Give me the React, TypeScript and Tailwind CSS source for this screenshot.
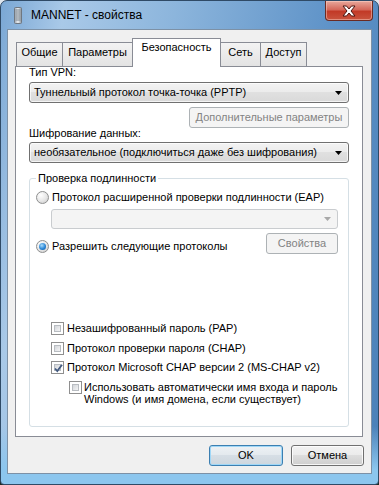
import clsx from "clsx"

const tabs = [
  { label: "Общие", w: "w-[47px]" },
  { label: "Параметры", w: "w-[71px]" },
  { label: "Безопасность", w: "w-[89px]", active: true },
  { label: "Сеть", w: "w-[41px]" },
  { label: "Доступ", w: "w-[47px]" },
]

function ModemIcon() {
  return (
    <svg width="8" height="17" viewBox="0 0 8 17">
      <defs>
        <linearGradient id="mi" x1="0" x2="1">
          <stop offset="0" stopColor="#9aa3ad" />
          <stop offset="0.5" stopColor="#eef1f4" />
          <stop offset="1" stopColor="#8a939c" />
        </linearGradient>
      </defs>
      <rect x="0.5" y="0.5" width="7" height="16" rx="1" fill="url(#mi)" stroke="#6f7780" />
      {[3, 5, 7, 9, 11, 13].map((y) => (
        <line key={y} x1="1.5" x2="6.5" y1={y} y2={y} stroke="#7d8791" strokeWidth="1" />
      ))}
    </svg>
  )
}

function CloseButton() {
  return (
    <div className="mr-[5px] flex h-[20px] w-[48px] items-center justify-center self-start rounded-b-[4px] border border-t-0 border-[#6b2a22] bg-[linear-gradient(#e8a89c,#d5695b_45%,#c23a27_55%,#c9543e)] shadow-[inset_0_0_0_1px_rgba(255,220,210,0.45)]">
      <svg width="16" height="12" viewBox="0 0 16 12">
        <path
          d="M2 1h3.5L8 4l2.5-3H14l-4 5 4 5h-3.5L8 8l-2.5 3H2l4-5z"
          fill="#ffffff"
          stroke="#4a1510"
          strokeWidth="1"
          strokeLinejoin="round"
        />
      </svg>
    </div>
  )
}

function Arrow({ disabled }: { disabled?: boolean }) {
  return (
    <svg width="7" height="4" viewBox="0 0 7 4">
      <path d="M0 0h7L3.5 4z" fill={disabled ? "#a8a8a8" : "#000000"} />
    </svg>
  )
}

function Combo({ value, disabled, className }: { value?: string; disabled?: boolean; className?: string }) {
  return (
    <div
      className={clsx(
        "flex items-center justify-between rounded-[3px] border pl-[4px] pr-[6px]",
        disabled
          ? "border-[#c9cccf] bg-[#f4f4f4]"
          : "border-[#707070] bg-[linear-gradient(#f3f3f3,#ebebeb_50%,#e0e0e0_50%,#d9d9d9)] shadow-[inset_0_0_0_1px_rgba(255,255,255,0.7)]",
        className,
      )}
    >
      <span className="whitespace-nowrap">{value}</span>
      <Arrow disabled={disabled} />
    </div>
  )
}

function Button({
  children,
  disabled,
  primary,
  className,
}: {
  children: string
  disabled?: boolean
  primary?: boolean
  className?: string
}) {
  return (
    <div
      className={clsx(
        "flex items-center justify-center rounded-[3px] border whitespace-nowrap",
        disabled && "border-[#adb2b5] bg-[#f4f4f4] text-[#838383]",
        primary &&
          "border-[#3c7fb1] bg-[linear-gradient(#edf1f4,#e3e9ee_50%,#d6dee5_50%,#cdd6de)] shadow-[inset_0_0_0_1px_#9fd7f7]",
        !disabled &&
          !primary &&
          "border-[#707070] bg-[linear-gradient(#f2f2f2,#ebebeb_50%,#dddddd_50%,#cfcfcf)] shadow-[inset_0_0_0_1px_rgba(255,255,255,0.8)]",
        className,
      )}
    >
      {children}
    </div>
  )
}

function Radio({ checked }: { checked?: boolean }) {
  return (
    <span className="flex h-[13px] w-[13px] shrink-0 items-center justify-center rounded-full border border-[#8e8f8f] bg-[radial-gradient(circle_at_35%_30%,#ffffff,#e6e6e6_55%,#c4c4c4)]">
      {checked && (
        <span className="h-[7px] w-[7px] rounded-full bg-[radial-gradient(circle_at_40%_35%,#a9dcfb,#2a86d6_55%,#0d4f95)]" />
      )}
    </span>
  )
}

function Check({ checked }: { checked?: boolean }) {
  return (
    <span className="relative flex h-[13px] w-[13px] shrink-0 border border-[#8f8f8f] bg-white p-[2px]">
      <span className="h-full w-full border border-[#b8bcc1] bg-[linear-gradient(135deg,#d3d6da,#f4f4f5)]" />
      {checked && (
        <svg className="absolute left-[1px] top-[1px]" width="11" height="11" viewBox="0 0 11 11">
          <path d="M2 5.5l2.3 2.6L9 1.8" fill="none" stroke="#42597f" strokeWidth="1.8" />
        </svg>
      )}
    </span>
  )
}

function CheckRow({ label, checked, className }: { label: string; checked?: boolean; className?: string }) {
  return (
    <div className={clsx("flex h-[15px] items-center gap-[3px] pl-[21px]", className)}>
      <Check checked={checked} />
      <span className="whitespace-nowrap">{label}</span>
    </div>
  )
}

export default function App() {
  return (
    <div className="h-[485px] w-[379px] overflow-hidden bg-[linear-gradient(#dfe6ee,#1e2b22)] font-['Liberation_Sans','Arimo',Arial,sans-serif] text-[11px] leading-[15px] text-black">
      <div className="flex h-full flex-col rounded-t-[7px] rounded-b-[4px] border border-[#2f4a66] bg-[linear-gradient(180deg,transparent_88%,#8cc6ee_97%),linear-gradient(100deg,#7aa7d4_0%,#a9c9e8_14%,#8cb5dc_38%,#5f93c8_72%,#4a80b8_100%)]">
        <div className="flex h-[28px] shrink-0 items-center">
          <div className="ml-[13px] flex">
            <ModemIcon />
          </div>
          <span className="ml-[9px] text-[12px]">MANNET - свойства</span>
          <div className="flex-1" />
          <CloseButton />
        </div>

        <div className="mx-[6px] mb-[10px] flex flex-1 flex-col border border-[#7d91a6] bg-[#f0f0f0] px-[7px] pt-[8px]">
          <div className="relative z-10 flex h-[28px] items-end pl-[1px]">
            {tabs.map((t, i) =>
              t.active ? (
                <div
                  key={t.label}
                  className={clsx(
                    "-ml-px -mb-px flex h-[29px] justify-center border border-b-0 border-[#898c95] bg-white pt-[1px]",
                    t.w,
                  )}
                >
                  {t.label}
                </div>
              ) : (
                <div
                  key={t.label}
                  className={clsx(
                    "flex h-[24px] justify-center border border-b-0 border-[#898c95] bg-[linear-gradient(#f3f3f3,#e3e3e3)] pt-[2px]",
                    i > 0 && "-ml-px",
                    t.w,
                  )}
                >
                  {t.label}
                </div>
              ),
            )}
          </div>

          <div className="flex h-[371px] w-[348px] flex-col border border-[#898c95] bg-white px-[13px]">
            <div className="-mt-px leading-[12px]">Тип VPN:</div>
            <Combo className="mt-[4px] h-[21px]" value="Туннельный протокол точка-точка (PPTP)" />
            <Button disabled className="mt-[4px] h-[21px] w-[160px] self-end">
              Дополнительные параметры
            </Button>
            <div className="-mt-px leading-[12px]">Шифрование данных:</div>
            <Combo className="mt-[3px] h-[21px]" value="необязательное (подключиться даже без шифрования)" />

            <fieldset className="mt-[9px] flex flex-col rounded-[3px] border border-[#d5dfe5] pb-[21px]">
              <legend className="ml-[6px] px-[2px] leading-[12px]">Проверка подлинности</legend>
              <div className="mt-[6px] flex h-[15px] items-center gap-[3px] pl-[6px]">
                <Radio />
                <span className="whitespace-nowrap">Протокол расширенной проверки подлинности (EAP)</span>
              </div>
              <Combo disabled className="mt-[4px] mr-[10px] ml-[21px] h-[20px]" />
              <div className="mt-[4px] flex items-end justify-between pr-[10px] pl-[6px]">
                <div className="flex h-[15px] items-center gap-[3px]">
                  <Radio checked />
                  <span className="whitespace-nowrap">Разрешить следующие протоколы</span>
                </div>
                <Button disabled className="h-[21px] w-[72px]">
                  Свойства
                </Button>
              </div>

              <CheckRow className="mt-[67px]" label="Незашифрованный пароль (PAP)" />
              <CheckRow className="mt-[5px]" label="Протокол проверки пароля (CHAP)" />
              <CheckRow className="mt-[4px]" checked label="Протокол Microsoft CHAP версии 2 (MS-CHAP v2)" />
              <div className="mt-[6px] flex items-start gap-[2px] pl-[39px]">
                <Check />
                <div className="leading-[12px]">
                  <div className="whitespace-nowrap">Использовать автоматически имя входа и пароль</div>
                  <div className="whitespace-nowrap">Windows (и имя домена, если существует)</div>
                </div>
              </div>
            </fieldset>
          </div>

          <div className="mt-[8px] flex justify-end gap-[8px]">
            <Button primary className="h-[21px] w-[74px]">
              OK
            </Button>
            <Button className="h-[21px] w-[73px]">Отмена</Button>
          </div>
        </div>
      </div>
    </div>
  )
}
